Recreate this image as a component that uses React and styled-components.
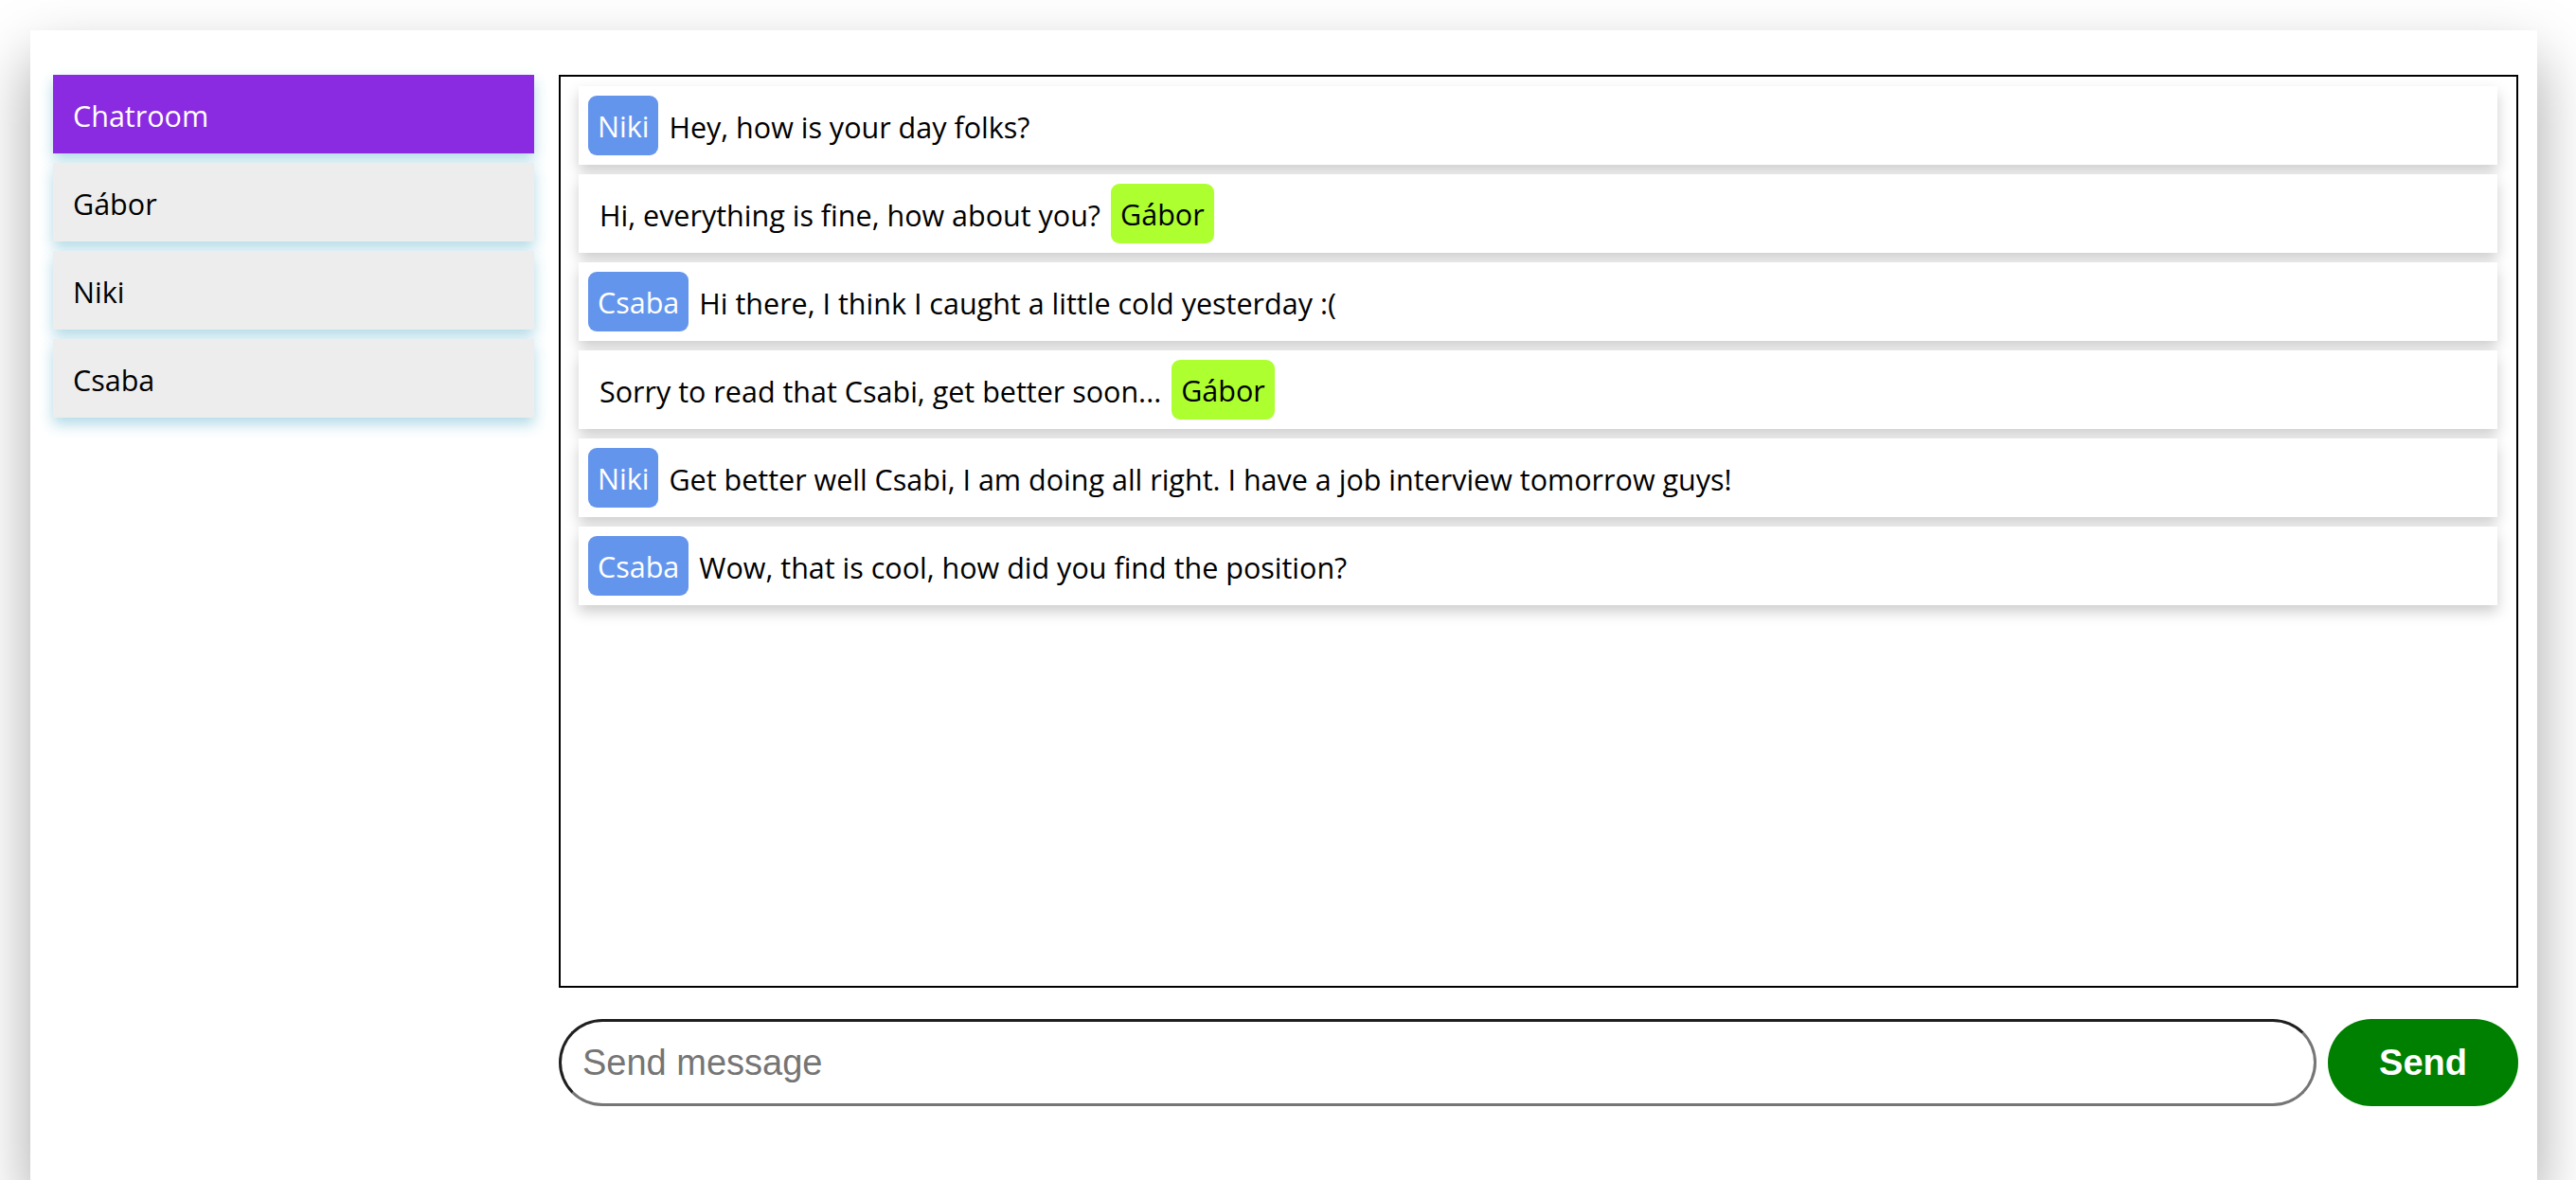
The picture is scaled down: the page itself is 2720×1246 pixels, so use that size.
import styled, {createGlobalStyle} from "styled-components";

const GlobalStyle = createGlobalStyle`
  html, body {
    margin: 0;
    padding: 0;
    background: #fff;
    overflow: hidden;
  }
  body {
    font-family: "Open Sans", "Noto Sans", sans-serif;
  }
  * {
    box-sizing: border-box;
  }
`;

const rooms = ["Chatroom", "Gábor", "Niki", "Csaba"];

const messages = [
  {id: 1, from: "Niki", text: "Hey, how is your day folks?"},
  {id: 2, from: "Gábor", text: "Hi, everything is fine, how about you?", own: true},
  {id: 3, from: "Csaba", text: "Hi there, I think I caught a little cold yesterday :("},
  {id: 4, from: "Gábor", text: "Sorry to read that Csabi, get better soon...", own: true},
  {id: 5, from: "Niki", text: "Get better well Csabi, I am doing all right. I have a job interview tomorrow guys!"},
  {id: 6, from: "Csaba", text: "Wow, that is cool, how did you find the position?"},
];

const App = () => {
  return (
    <>
      <GlobalStyle />
      <Card>
        <Sidebar>
          {rooms.map((name, i) => (
            <RoomItem key={name} $active={i === 0}>
              {name}
            </RoomItem>
          ))}
        </Sidebar>
        <ChatColumn>
          <ChatBox>
            {messages.map((msg) => (
              <Message key={msg.id} $own={msg.own}>
                {msg.own ? (
                  <>
                    <MessageText>{msg.text}</MessageText>
                    <Sender $own>{msg.from}</Sender>
                  </>
                ) : (
                  <>
                    <Sender>{msg.from}</Sender>
                    <MessageText>{msg.text}</MessageText>
                  </>
                )}
              </Message>
            ))}
          </ChatBox>
          <InputRow>
            <MessageInput placeholder="Send message" />
            <SendButton>Send</SendButton>
          </InputRow>
        </ChatColumn>
      </Card>
    </>
  );
};

const Card = styled.div`
  margin: 32px 0 0 32px;
  width: 2647px;
  height: 1214px;
  background: #fff;
  box-shadow: 0 30px 60px rgba(0, 0, 0, 0.35);
  padding: 47px 20px 0 24px;
  display: grid;
  grid-template-columns: 508px 1fr;
  column-gap: 26px;
  align-items: start;
`;

const Sidebar = styled.ul`
  list-style: none;
  margin: 0;
  padding: 0;
  display: flex;
  flex-direction: column;
  gap: 10px;
`;

const RoomItem = styled.li`
  height: 83px;
  display: flex;
  align-items: center;
  padding: 2px 21px 0;
  font-size: 30.5px;
  background: ${(p) => (p.$active ? "#8a2be2" : "#ededed")};
  color: ${(p) => (p.$active ? "#fff" : "#000")};
  box-shadow: 0 7px 14px 0 rgba(173, 216, 230, 0.95);
`;

const ChatColumn = styled.div`
  display: flex;
  flex-direction: column;
`;

const ChatBox = styled.div`
  height: 964px;
  border: 2px solid #000;
  padding: 10px 20px 0 19px;
  display: flex;
  flex-direction: column;
  gap: 10px;
`;

const Message = styled.div`
  height: 83px;
  background: #fff;
  display: flex;
  align-items: center;
  gap: 11px;
  padding: 0 10px 0 ${(p) => (p.$own ? "22px" : "10px")};
  font-size: 30.5px;
  color: #000;
  box-shadow: 0 7px 14px 0 rgba(0, 0, 0, 0.2);
`;

const MessageText = styled.span`
  padding-top: 2px;
`;

const Sender = styled.span`
  height: 63px;
  display: inline-flex;
  align-items: center;
  padding: 0 10px;
  border-radius: 9px;
  background: ${(p) => (p.$own ? "#adff2f" : "#6495ed")};
  color: ${(p) => (p.$own ? "#000" : "#fff")};
`;

const InputRow = styled.div`
  margin-top: 33px;
  display: flex;
  gap: 12px;
  height: 92px;
`;

const MessageInput = styled.input`
  flex: 1;
  height: 100%;
  border: 3px solid;
  border-color: #1f1f1f #767676 #767676 #1f1f1f;
  border-radius: 46px;
  padding: 0 22px;
  font-family: "Liberation Sans", Arial, sans-serif;
  font-size: 38px;
  outline: none;

  &::placeholder {
    color: #757575;
  }
`;

const SendButton = styled.button`
  width: 201px;
  height: 100%;
  border: none;
  border-radius: 46px;
  background: #008000;
  color: #fff;
  font-family: "Liberation Sans", Arial, sans-serif;
  font-weight: bold;
  font-size: 38px;
  cursor: pointer;
`;

export default App;
